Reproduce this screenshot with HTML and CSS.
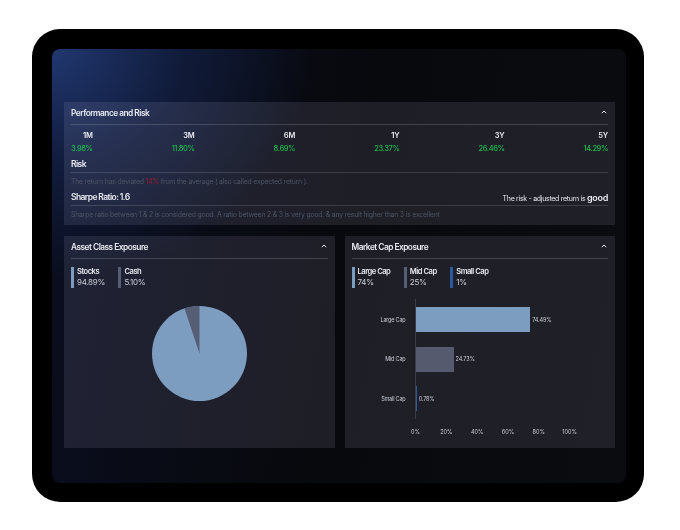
FILE: index.html
```html
<!DOCTYPE html>
<html lang="en">

<head>
    <meta charset="UTF-8">
    <meta name="viewport" content="width=device-width, initial-scale=1.0">
    <title>Portfolio Exposure</title>
    <link rel="stylesheet" href="styles.css">
</head>

<body>
    <div class="tablet">
        <div class="screen">
            <div class="panel perf">
                <div class="panel-head">
                    <h2 class="panel-title">Performance and Risk</h2>
                    <svg class="chevron" viewBox="0 0 6 4"><path d="M.8 3.2 3 1l2.2 2.2"/></svg>
                </div>
                <div class="periods">
                    <div class="period"><span class="period-name">1M</span><span class="period-val">3.98%</span></div>
                    <div class="period"><span class="period-name">3M</span><span class="period-val">11.80%</span></div>
                    <div class="period"><span class="period-name">6M</span><span class="period-val">8.69%</span></div>
                    <div class="period"><span class="period-name">1Y</span><span class="period-val">23.37%</span></div>
                    <div class="period"><span class="period-name">3Y</span><span class="period-val">26.46%</span></div>
                    <div class="period"><span class="period-name">5Y</span><span class="period-val">14.29%</span></div>
                </div>
                <div class="sub-head">
                    <h3 class="sub-title">Risk</h3>
                </div>
                <p class="note">The return has deviated <span class="red">14%</span> from the average ( also called expected return ).</p>
                <div class="sub-head">
                    <h3 class="sub-title">Sharpe Ratio: 1.6</h3>
                    <span class="verdict">The risk - adjusted return is <b>good</b></span>
                </div>
                <p class="note">Sharpe ratio between 1 &amp; 2 is considered good. A ratio between 2 &amp; 3 is very good. &amp; any result higher than 3 is excellent</p>
            </div>

            <div class="cards">
                <div class="panel card">
                    <div class="panel-head">
                        <h2 class="panel-title">Asset Class Exposure</h2>
                        <svg class="chevron" viewBox="0 0 6 4"><path d="M.8 3.2 3 1l2.2 2.2"/></svg>
                    </div>
                    <div class="legend">
                        <div class="leg leg-blue"><span class="leg-name">Stocks</span><span class="leg-val">94.89%</span></div>
                        <div class="leg leg-grey"><span class="leg-name">Cash</span><span class="leg-val">5.10%</span></div>
                    </div>
                    <svg class="pie" viewBox="0 0 95 95">
                        <circle cx="47.5" cy="47.5" r="47.5" fill="#7c9cc0"/>
                        <path d="M47.5 47.5 32.5 2.4A47.5 47.5 0 0 1 47.5 0Z" fill="#565e76"/>
                    </svg>
                </div>

                <div class="panel card">
                    <div class="panel-head">
                        <h2 class="panel-title">Market Cap Exposure</h2>
                        <svg class="chevron" viewBox="0 0 6 4"><path d="M.8 3.2 3 1l2.2 2.2"/></svg>
                    </div>
                    <div class="legend">
                        <div class="leg leg-blue"><span class="leg-name">Large Cap</span><span class="leg-val">74%</span></div>
                        <div class="leg leg-grey"><span class="leg-name">Mid Cap</span><span class="leg-val">25%</span></div>
                        <div class="leg leg-navy"><span class="leg-name">Small Cap</span><span class="leg-val">1%</span></div>
                    </div>
                    <div class="chart">
                        <div class="rows">
                            <div class="row">
                                <span class="row-name">Large Cap</span>
                                <div class="bar bar-blue" style="width: 114.7px"></div>
                                <span class="row-val">74.49%</span>
                            </div>
                            <div class="row">
                                <span class="row-name">Mid Cap</span>
                                <div class="bar bar-grey" style="width: 38.1px"></div>
                                <span class="row-val">24.73%</span>
                            </div>
                            <div class="row">
                                <span class="row-name">Small Cap</span>
                                <div class="bar bar-navy" style="width: 1.2px"></div>
                                <span class="row-val">0.78%</span>
                            </div>
                        </div>
                        <div class="ticks">
                            <span class="tick">0%</span>
                            <span class="tick">20%</span>
                            <span class="tick">40%</span>
                            <span class="tick">60%</span>
                            <span class="tick">80%</span>
                            <span class="tick">100%</span>
                        </div>
                    </div>
                </div>
            </div>
        </div>
    </div>
</body>

</html>
```

FILE: styles.css
```css
* {
    box-sizing: border-box;
}

body {
    margin: 0;
    background-color: #fff;
    font-family: 'Inter', 'Liberation Sans', sans-serif;
    color: #e8eaf0;
}

h2,
h3,
p {
    margin: 0;
}

.tablet {
    width: 612px;
    height: 473px;
    margin: 29px 0 0 32px;
    padding: 20px 18px 19px 20px;
    background-color: #000;
    border-radius: 28px;
}

.screen {
    height: 100%;
    padding: 53px 11px 0 12px;
    border-radius: 8px;
    background-color: #08090c;
    background-image:
        radial-gradient(ellipse 260px 230px at 0 0, #20376f 0%, rgba(24, 42, 90, 0.5) 50%, rgba(10, 14, 30, 0) 100%),
        linear-gradient(100deg, #0a0e20 0%, #08090d 50%, #0b0c0f 100%);
    filter: blur(0.45px);
}

.panel {
    padding: 0 7px;
    background-color: rgba(215, 220, 255, 0.105);
}

.panel-head {
    display: flex;
    justify-content: space-between;
    align-items: center;
    height: 23px;
    border-bottom: 1px solid rgba(255, 255, 255, 0.16);
}

.panel-title {
    font-size: 8.3px;
    font-weight: 600;
    letter-spacing: -0.5px;
}

.chevron {
    width: 6px;
    height: 4px;
    margin: 0 1px 3px 0;
    fill: none;
    stroke: #e8eaf0;
    stroke-width: 1;
}

.perf {
    height: 123px;
}

.periods {
    display: flex;
    justify-content: space-between;
    padding-top: 6px;
}

.period {
    display: flex;
    flex-direction: column;
    align-items: flex-end;
    gap: 3px;
}

.period-name {
    font-size: 7.5px;
    font-weight: 600;
    line-height: 10px;
    letter-spacing: -0.2px;
}

.period-val {
    font-size: 7.5px;
    font-weight: 500;
    line-height: 10px;
    letter-spacing: -0.4px;
    color: #1dbb4c;
}

.sub-head {
    display: flex;
    justify-content: space-between;
    align-items: center;
    height: 17px;
    margin-top: 2px;
    border-bottom: 1px solid rgba(255, 255, 255, 0.14);
}

.sub-title {
    font-size: 8.5px;
    font-weight: 600;
    letter-spacing: -0.6px;
}

.verdict {
    font-size: 7px;
    letter-spacing: -0.3px;
}

.verdict b {
    font-size: 9px;
    font-weight: 600;
}

.note {
    padding-top: 4px;
    font-size: 6.9px;
    line-height: 10px;
    letter-spacing: -0.2px;
    color: #4d5566;
}

.red {
    color: #9a1a2c;
}

.note + .sub-head {
    margin-top: 2px;
}

.cards {
    display: flex;
    gap: 10px;
    margin-top: 11px;
}

.card {
    flex: 1;
    height: 212px;
}

.legend {
    display: flex;
    gap: 13.5px;
    margin-top: 8px;
}

.leg {
    display: flex;
    flex-direction: column;
    height: 21px;
    padding-left: 3px;
    border-left: 3px solid #7c9cc0;
}

.leg-grey {
    border-left-color: #565e76;
}

.leg-navy {
    border-left-color: #2a5a9b;
}

.leg-name {
    font-size: 7.6px;
    font-weight: 600;
    line-height: 10px;
    letter-spacing: -0.5px;
}

.leg-val {
    font-size: 8px;
    line-height: 11px;
    letter-spacing: -0.3px;
    color: #c9ced8;
}

.pie {
    display: block;
    width: 95px;
    height: 95px;
    margin: 18px auto 0;
}

.chart {
    margin-top: 11px;
}

.rows {
    display: flex;
    flex-direction: column;
    gap: 14.5px;
    height: 120px;
    margin-left: 63px;
    padding-top: 8px;
    border-left: 1px solid #3a3d47;
}

.row {
    display: flex;
    align-items: center;
    gap: 2px;
    height: 25px;
}

.row-name {
    width: 40px;
    margin-left: -50px;
    margin-right: 8px;
    font-size: 5.5px;
    letter-spacing: -0.2px;
    text-align: right;
    color: #c9ced8;
    flex-shrink: 0;
}

.row-val {
    font-size: 5.5px;
    letter-spacing: -0.15px;
    color: #c9ced8;
}

.bar {
    height: 25px;
}

.bar-blue {
    background-color: #7c9cc0;
}

.bar-grey {
    background-color: #565a6e;
}

.bar-navy {
    background-color: #2a5a9b;
}

.ticks {
    display: flex;
    justify-content: space-between;
    width: 154px;
    margin: 10px 0 0 64px;
}

.tick {
    width: 0;
    display: flex;
    justify-content: center;
    font-size: 5.5px;
    color: #c9ced8;
}
```
